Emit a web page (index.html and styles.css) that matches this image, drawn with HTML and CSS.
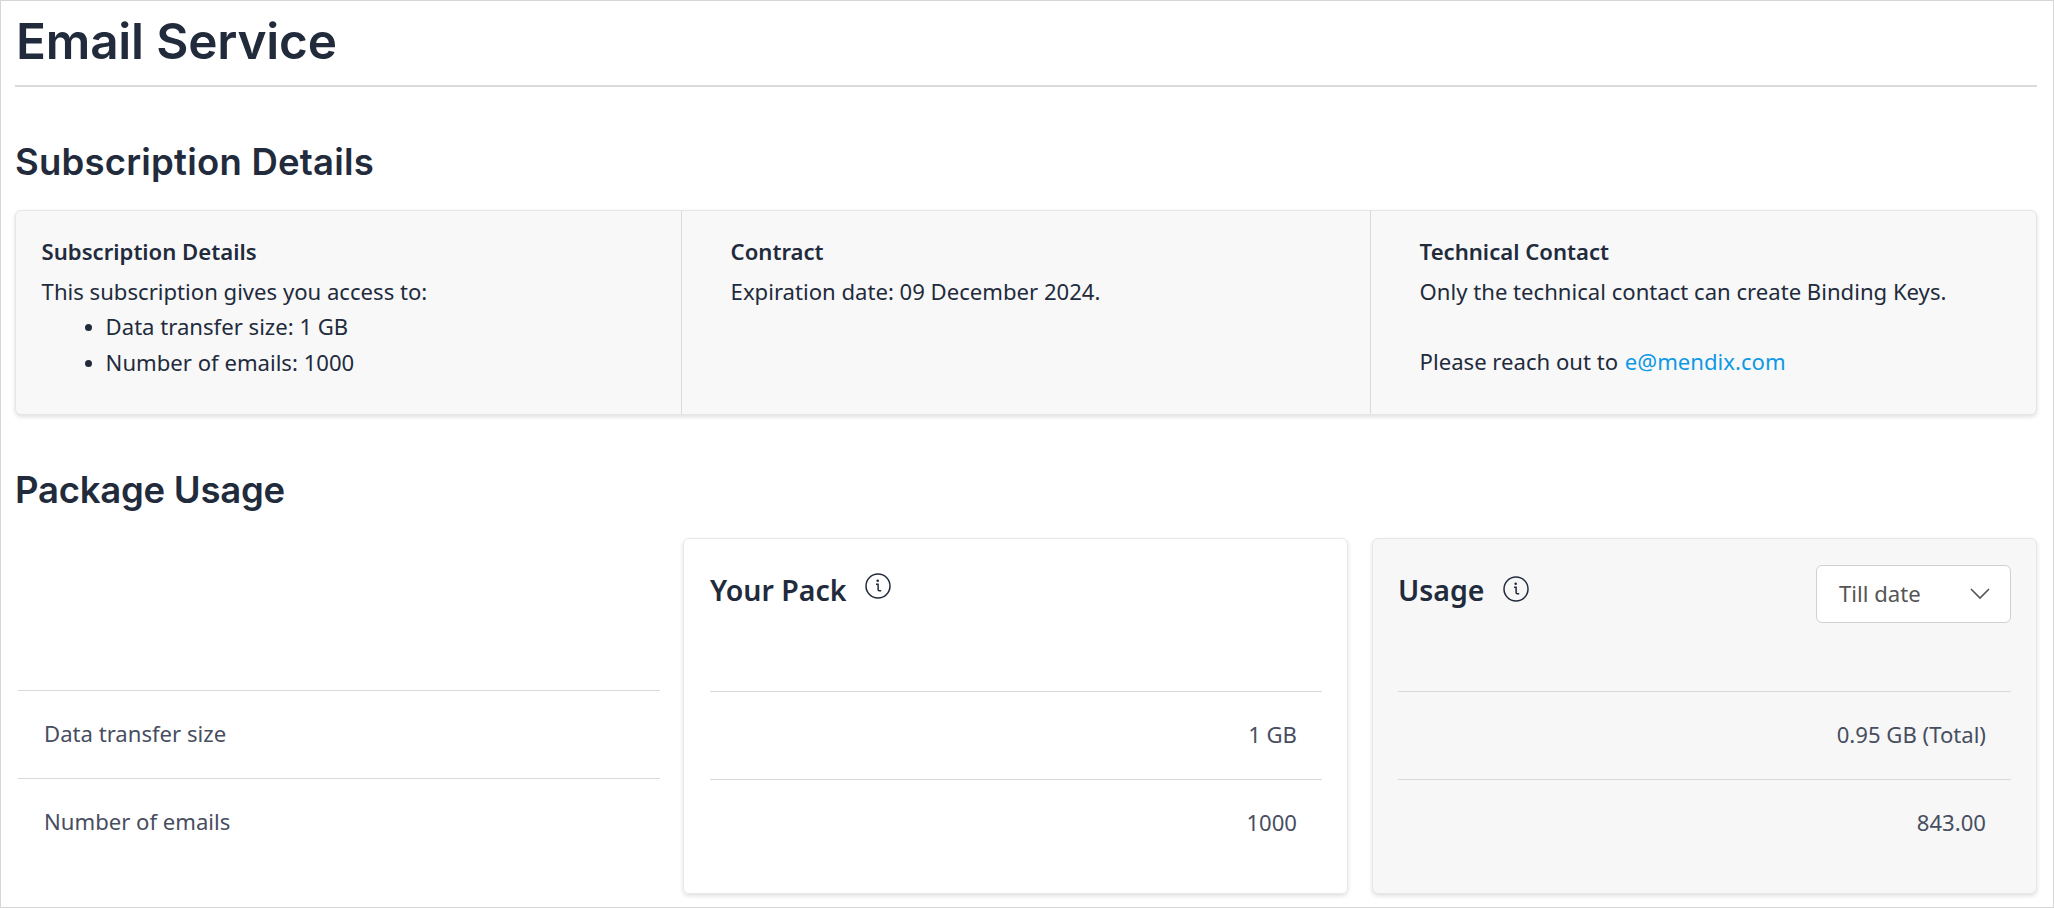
FILE: index.html
```html
<!DOCTYPE html>
<html lang="en">
<head>
<meta charset="utf-8">
<title>Email Service</title>
<link rel="stylesheet" href="styles.css">
</head>
<body>
<main class="page">
  <h1 class="page-title">Email Service</h1>
  <h2 class="section-title">Subscription Details</h2>
  <section class="details">
    <div class="detail">
      <h3>Subscription Details</h3>
      <p>This subscription gives you access to:</p>
      <ul>
        <li>Data transfer size: 1 GB</li>
        <li>Number of emails: 1000</li>
      </ul>
    </div>
    <div class="detail">
      <h3>Contract</h3>
      <p>Expiration date: 09 December 2024.</p>
    </div>
    <div class="detail">
      <h3>Technical Contact</h3>
      <p>Only the technical contact can create Binding Keys.</p>
      <p class="reach">Please reach out to <a class="mail">e@mendix.com</a></p>
    </div>
  </section>
  <h2 class="section-title usage-title">Package Usage</h2>
  <section class="packages">
    <div class="labels">
      <div class="row">Data transfer size</div>
      <div class="row">Number of emails</div>
    </div>
    <div class="card">
      <header class="card-head">
        <h3>Your Pack</h3>
        <svg class="info info-raised" viewBox="0 0 26 26"><circle cx="13" cy="13" r="12"/><path d="M11 11.3h2.1v5.3q0 1.2 1.2 1.2h1.9"/><circle class="dot" cx="12.7" cy="7.8" r="1.3"/></svg>
      </header>
      <div class="row">1 GB</div>
      <div class="row">1000</div>
    </div>
    <div class="card card-gray">
      <header class="card-head">
        <h3>Usage</h3>
        <svg class="info" viewBox="0 0 26 26"><circle cx="13" cy="13" r="12"/><path d="M11 11.3h2.1v5.3q0 1.2 1.2 1.2h1.9"/><circle class="dot" cx="12.7" cy="7.8" r="1.3"/></svg>
        <div class="select">Till date<svg class="chevron" viewBox="0 0 20 12"><path d="M1 1l9 9 9-9"/></svg></div>
      </header>
      <div class="row">0.95 GB (Total)</div>
      <div class="row">843.00</div>
    </div>
  </section>
</main>
</body>
</html>
```
FILE: styles.css
```css
* { box-sizing: border-box; }
body {
  margin: 0;
  background: #fff;
  color: #222b3c;
  font: 22.12px/35px "Noto Sans", sans-serif;
}
h1, h2, h3, p, ul { margin: 0; padding: 0; }
.page {
  height: 908px;
  padding: 0 16px 0 14px;
  border: 1px solid #d7d7d7;
  overflow: hidden;
}
.page-title {
  height: 86px;
  padding: 10px 0 0 1px;
  border-bottom: 2px solid #d9dadb;
  font: 600 49.5px/60px Inter, sans-serif;
  letter-spacing: -.2px;
}
.section-title {
  height: 123px;
  padding-top: 53px;
  font: 600 36.5px/44px Inter, sans-serif;
  letter-spacing: .22px;
}
.details {
  display: grid;
  grid-template-columns: 665px 689px 1fr;
  height: 205px;
  border: 1px solid #e4e5e6;
  border-radius: 6px;
  background: #f8f8f8;
  box-shadow: 0 2px 4px rgba(0, 0, 0, .13);
}
.detail { padding: 23px 20px 0 48.6px; border-left: 1px solid #d9dadc; }
.detail:first-child { padding-left: 25.6px; border-left: 0; }
.detail h3 { font-size: 22.12px; font-weight: 600; line-height: 35px; }
.detail p { margin-top: 5px; }
.detail .reach { margin-top: 35px; }
.detail ul { padding-left: 64px; margin-top: -1px; }
.detail li { line-height: 36px; }
.detail li::marker { font-size: 20px; }
.mail { margin-left: 1px; color: #0f98e4; }
.usage-title { height: 123px; letter-spacing: -.25px; }
.packages {
  display: grid;
  grid-template-columns: 644px 665px 665px;
  gap: 24px;
  height: 356px;
  color: #474e5f;
}
.labels { padding-top: 152px; padding-left: 3px; }
.labels .row { padding-left: 26px; margin-right: -1px; }
.row { height: 88px; padding: 25px 25px 0; border-top: 1px solid #d8d9dc; }
.card {
  padding: 0 25px 0 26px;
  border: 1px solid #e6e7e8;
  border-radius: 6px;
  box-shadow: 0 2px 4px rgba(0, 0, 0, .13);
  text-align: right;
}
.card-gray { padding-left: 25px; background: #f7f7f7; }
.card-head {
  display: flex;
  height: 152px;
  padding-top: 26px;
  color: #222b3c;
}
.card-head h3 { padding-top: 6px; font-size: 28.5px; font-weight: 600; line-height: 38px; }
.info { width: 26px; height: 26px; margin: 11px 0 0 18px; fill: none; stroke: #222b3c; stroke-width: 1.5; }
.info-raised { margin-top: 8px; }
.info .dot { fill: #222b3c; stroke: none; }
.select {
  display: flex;
  align-items: center;
  justify-content: space-between;
  width: 195px;
  height: 58px;
  margin-left: auto;
  padding: 0 20px 1px 22px;
  border: 1px solid #d0d1d3;
  border-radius: 6px;
  background: #fff;
  color: #555;
}
.chevron { width: 20px; height: 12px; fill: none; stroke: #555; stroke-width: 1.6; }
```
